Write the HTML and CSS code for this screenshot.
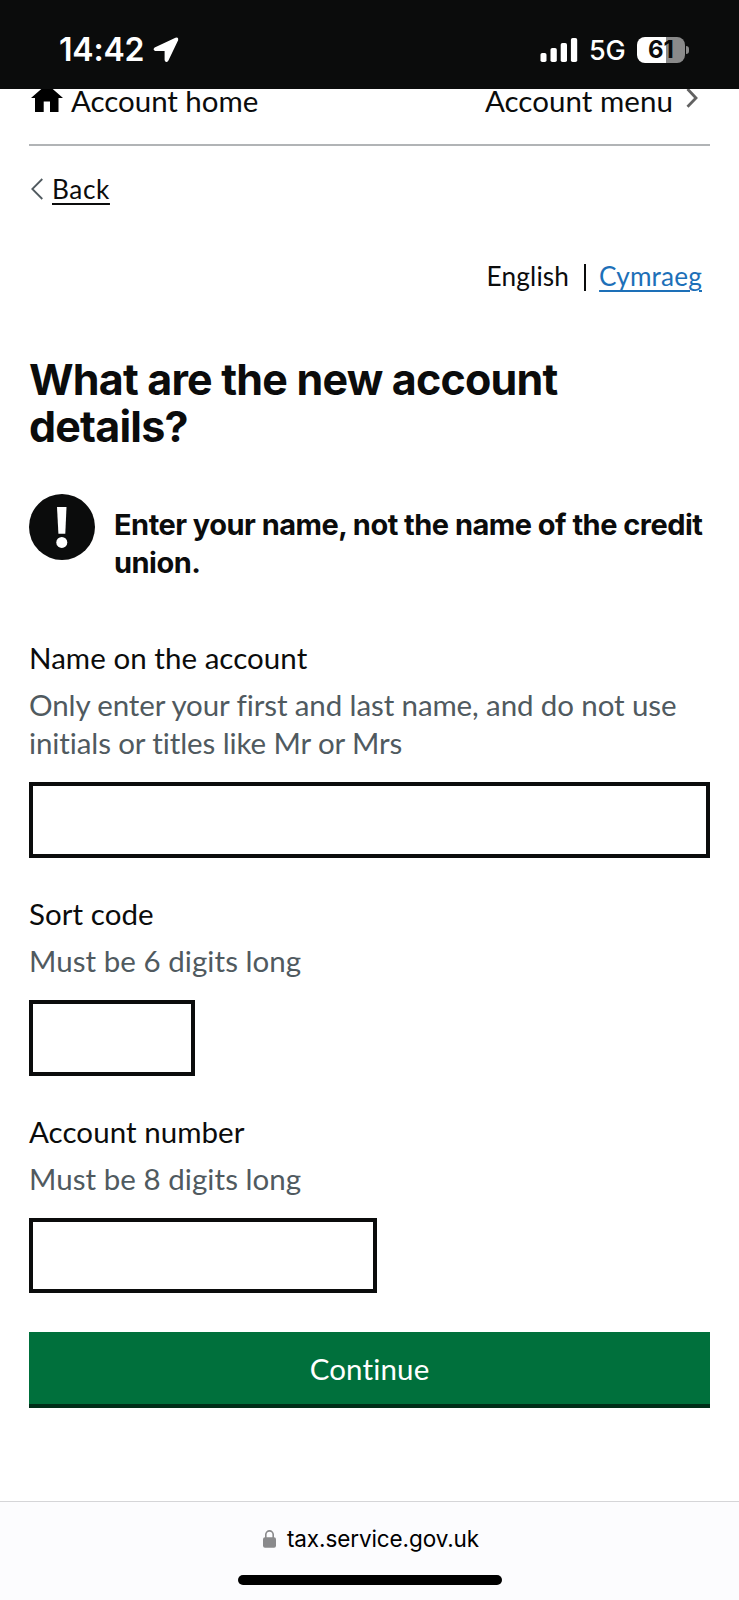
FILE: index.html
```
<!DOCTYPE html>
<html lang="en">
<head>
    <meta charset="UTF-8">
    <meta name="viewport" content="width=device-width, initial-scale=1.0">
    <title>What are the new account details?</title>
    <link rel="stylesheet" href="styles.css">
</head>
<body>

<div class="status-bar">
    <div class="status-left">
        <span class="clock">14:42</span>
        <svg class="location-icon" viewBox="0 0 26 26">
            <path d="M22.8 1.6 L2 11.2 Q.6 12.6 2.4 13.2 H11.6 Q12.4 13.2 12.4 14 V23 Q13.2 25.4 14.6 23.4 L24.4 2.8 Q24.6 .8 22.8 1.6Z" fill="#fff" stroke="#fff" stroke-width="1.6" stroke-linejoin="round"/>
        </svg>
    </div>
    <div class="status-right">
        <svg class="signal-icon" viewBox="0 0 38 24">
            <rect x="0.5" y="15" width="6" height="9" rx="1.8" fill="#fff"/>
            <rect x="10.5" y="10" width="6.3" height="14" rx="1.8" fill="#fff"/>
            <rect x="20.7" y="5" width="6.3" height="19" rx="1.8" fill="#fff"/>
            <rect x="30.9" y="0" width="6.3" height="24" rx="1.8" fill="#fff"/>
        </svg>
        <span class="network">5G</span>
        <div class="battery"><span>61</span></div>
        <div class="battery-cap"></div>
    </div>
</div>

<div class="page">
    <nav class="account-nav">
        <a class="nav-home" href="#">
            <svg class="home-icon" viewBox="0 0 32 28">
                <path d="M16 0 L32 14 H27.5 V28 H19 V17.5 H12.7 V28 H4 V14 H0Z" fill="#000"/>
            </svg>
            <span>Account home</span>
        </a>
        <a class="nav-menu" href="#">
            <span>Account menu</span>
            <svg class="menu-arrow" viewBox="0 0 12 20">
                <path d="M1.5 1 L10 10 L1.5 18.7" fill="none" stroke="#626262" stroke-width="2.8"/>
            </svg>
        </a>
    </nav>

    <a class="back-link" href="#">
        <svg class="back-arrow" viewBox="0 0 12 22">
            <path d="M11.3 1 L1.3 11 L11.3 21" fill="none" stroke="#505a5f" stroke-width="1.8"/>
        </svg>
        <span>Back</span>
    </a>

    <div class="language">
        <span>English</span>
        <i class="divider"></i>
        <a href="#">Cymraeg</a>
    </div>

    <h1>What are the new account details?</h1>

    <div class="warning">
        <svg class="warning-icon" viewBox="0 0 66 66">
            <circle cx="33" cy="33" r="33" fill="#0b0c0c"/>
            <path d="M28 13 H37.5 L36.3 39.7 H29.4Z" fill="#fff"/>
            <circle cx="32.8" cy="48.4" r="5.5" fill="#fff"/>
        </svg>
        <strong>Enter your name, not the name of the credit union.</strong>
    </div>

    <form>
        <div class="form-group">
            <label for="name">Name on the account</label>
            <div class="hint hint-name">Only enter your first and last name, and do not use initials or titles like Mr or Mrs</div>
            <input id="name" type="text">
        </div>
        <div class="form-group">
            <label for="sort-code">Sort code</label>
            <div class="hint">Must be 6 digits long</div>
            <input id="sort-code" class="input-sort" type="text">
        </div>
        <div class="form-group">
            <label for="account-number">Account number</label>
            <div class="hint">Must be 8 digits long</div>
            <input id="account-number" class="input-number" type="text">
        </div>
        <button type="button">Continue</button>
    </form>
</div>

<div class="browser-bar">
    <div class="address">
        <svg class="lock-icon" viewBox="0 0 13 18">
            <rect x="0" y="7.2" width="13" height="10.6" rx="2" fill="#8a8a8c"/>
            <path d="M2.8 8 V4.6 a3.7 3.7 0 0 1 7.4 0 V8" fill="none" stroke="#8a8a8c" stroke-width="1.6"/>
        </svg>
        <span>tax.service.gov.uk</span>
    </div>
    <div class="home-indicator"></div>
</div>

</body>
</html>
```
FILE: styles.css
```
* {
    margin: 0;
    padding: 0;
    box-sizing: border-box;
}

body {
    font-family: Lato, Arial, sans-serif;
    font-size: 29.5px;
    line-height: 38px;
    letter-spacing: 0.05px;
    color: #0b0c0c;
    background-color: #fff;
    height: 1600px;
    display: flex;
    flex-direction: column;
    overflow: hidden;
    font-variant-ligatures: none;
}

svg {
    display: block;
    flex-shrink: 0;
}

a {
    color: #0b0c0c;
    text-decoration: none;
}

/* Phone status bar */
.status-bar {
    height: 89px;
    flex-shrink: 0;
    background-color: #0b0c0c;
    color: #fff;
    font-family: Inter, sans-serif;
    padding: 30px 50px 0 59px;
    display: flex;
    justify-content: space-between;
    align-items: flex-start;
    position: relative;
    z-index: 1;
}

.status-left,
.status-right {
    display: flex;
    align-items: center;
    height: 39px;
}

.clock {
    font-size: 32px;
    font-weight: 600;
    line-height: 40px;
    letter-spacing: -0.2px;
    width: 94px;
}

.location-icon {
    width: 26px;
    height: 26px;
}

.signal-icon {
    width: 38px;
    height: 24px;
}

.network {
    font-size: 27px;
    font-weight: 500;
    letter-spacing: -0.3px;
    padding-top: 2px;
    margin-left: 11px;
    width: 48px;
}

.battery {
    width: 48px;
    height: 26px;
    border-radius: 8px;
    background: linear-gradient(to right, #fff 60.5%, #8a8a8a 60.5%);
    color: #0b0c0c;
    font-size: 24px;
    font-weight: 700;
    line-height: 26px;
    letter-spacing: 0;
    text-align: center;
}

.battery-cap {
    width: 3px;
    height: 8px;
    margin-left: 1px;
    border-radius: 0 3px 3px 0;
    background-color: #8a8a8a;
}

.page {
    padding: 0 29px;
    flex: 1;
}

/* The nav is scrolled partly under the status bar */
.account-nav {
    height: 64px;
    margin-top: -7px;
    border-bottom: 2px solid #b1b4b6;
    display: flex;
    justify-content: space-between;
    align-items: flex-start;
}

.nav-home,
.nav-menu {
    display: flex;
}

.nav-home {
    letter-spacing: -0.05px;
}

.home-icon {
    width: 32px;
    height: 28px;
    margin: 2px 8px 0 2px;
}

.menu-arrow {
    width: 12px;
    height: 20px;
    margin: 6px 12px 0 13px;
}

.back-link {
    display: flex;
    margin-top: 27px;
    font-size: 26.2px;
    line-height: 33px;
    letter-spacing: 0.6px;
}

.back-arrow {
    width: 12px;
    height: 22px;
    margin: 5px 9px 0 2px;
}

.back-link span {
    text-decoration: underline;
    text-decoration-thickness: 2px;
    text-underline-offset: 4px;
}

.language {
    display: flex;
    justify-content: flex-end;
    margin: 54px 8px 0 0;
    font-size: 26.2px;
    line-height: 33px;
    letter-spacing: 0.15px;
}

.language a {
    color: #1d70b8;
    text-decoration: underline;
    text-decoration-thickness: 2px;
    text-underline-offset: 4px;
}

.divider {
    width: 2px;
    height: 27px;
    margin: 4px 13px 0 15px;
    background-color: #0b0c0c;
}

h1 {
    margin-top: 63px;
    font-family: Inter, sans-serif;
    font-size: 43px;
    line-height: 47.4px;
    letter-spacing: -0.8px;
}

.warning {
    display: flex;
    margin-top: 43px;
}

.warning-icon {
    width: 66px;
    height: 66px;
}

.warning strong {
    margin: 12px -10px 0 19px;
    font-family: Inter, sans-serif;
    font-size: 29px;
    letter-spacing: -0.52px;
}

form {
    margin-top: 57px;
}

.form-group {
    margin-bottom: 37px;
}

.form-group:last-of-type {
    margin-bottom: 38.6px;
}

label {
    display: block;
    margin-bottom: 9.4px;
}

.hint {
    color: #505a5f;
    margin-bottom: 19.9px;
}

.hint-name {
    letter-spacing: -0.11px;
}

input {
    display: block;
    width: 100%;
    height: 75.6px;
    border: 4px solid #0b0c0c;
    border-radius: 0;
    background-color: #fff;
}

.input-sort {
    width: 166px;
}

.input-number {
    width: 348px;
}

button {
    display: block;
    width: 100%;
    height: 76px;
    padding-top: 1px;
    border: none;
    border-bottom: 4px solid #002d18;
    background-color: #00703c;
    color: #fff;
    font-family: inherit;
    font-size: 29.5px;
    letter-spacing: 0.15px;
}

/* Browser address bar */
.browser-bar {
    height: 99px;
    border-top: 1px solid #d5d5d8;
    background-color: #fcfcfe;
    display: flex;
    flex-direction: column;
    align-items: center;
}

.address {
    display: flex;
    align-items: center;
    height: 36px;
    margin-top: 19px;
    padding-left: 3px;
    font-family: Inter, sans-serif;
    font-size: 22.5px;
    letter-spacing: -0.1px;
    color: #000;
}

.lock-icon {
    width: 13px;
    height: 18px;
    margin-right: 11px;
}

.home-indicator {
    width: 264px;
    height: 10px;
    margin-top: 18px;
    border-radius: 5px;
    background-color: #000;
}
```
